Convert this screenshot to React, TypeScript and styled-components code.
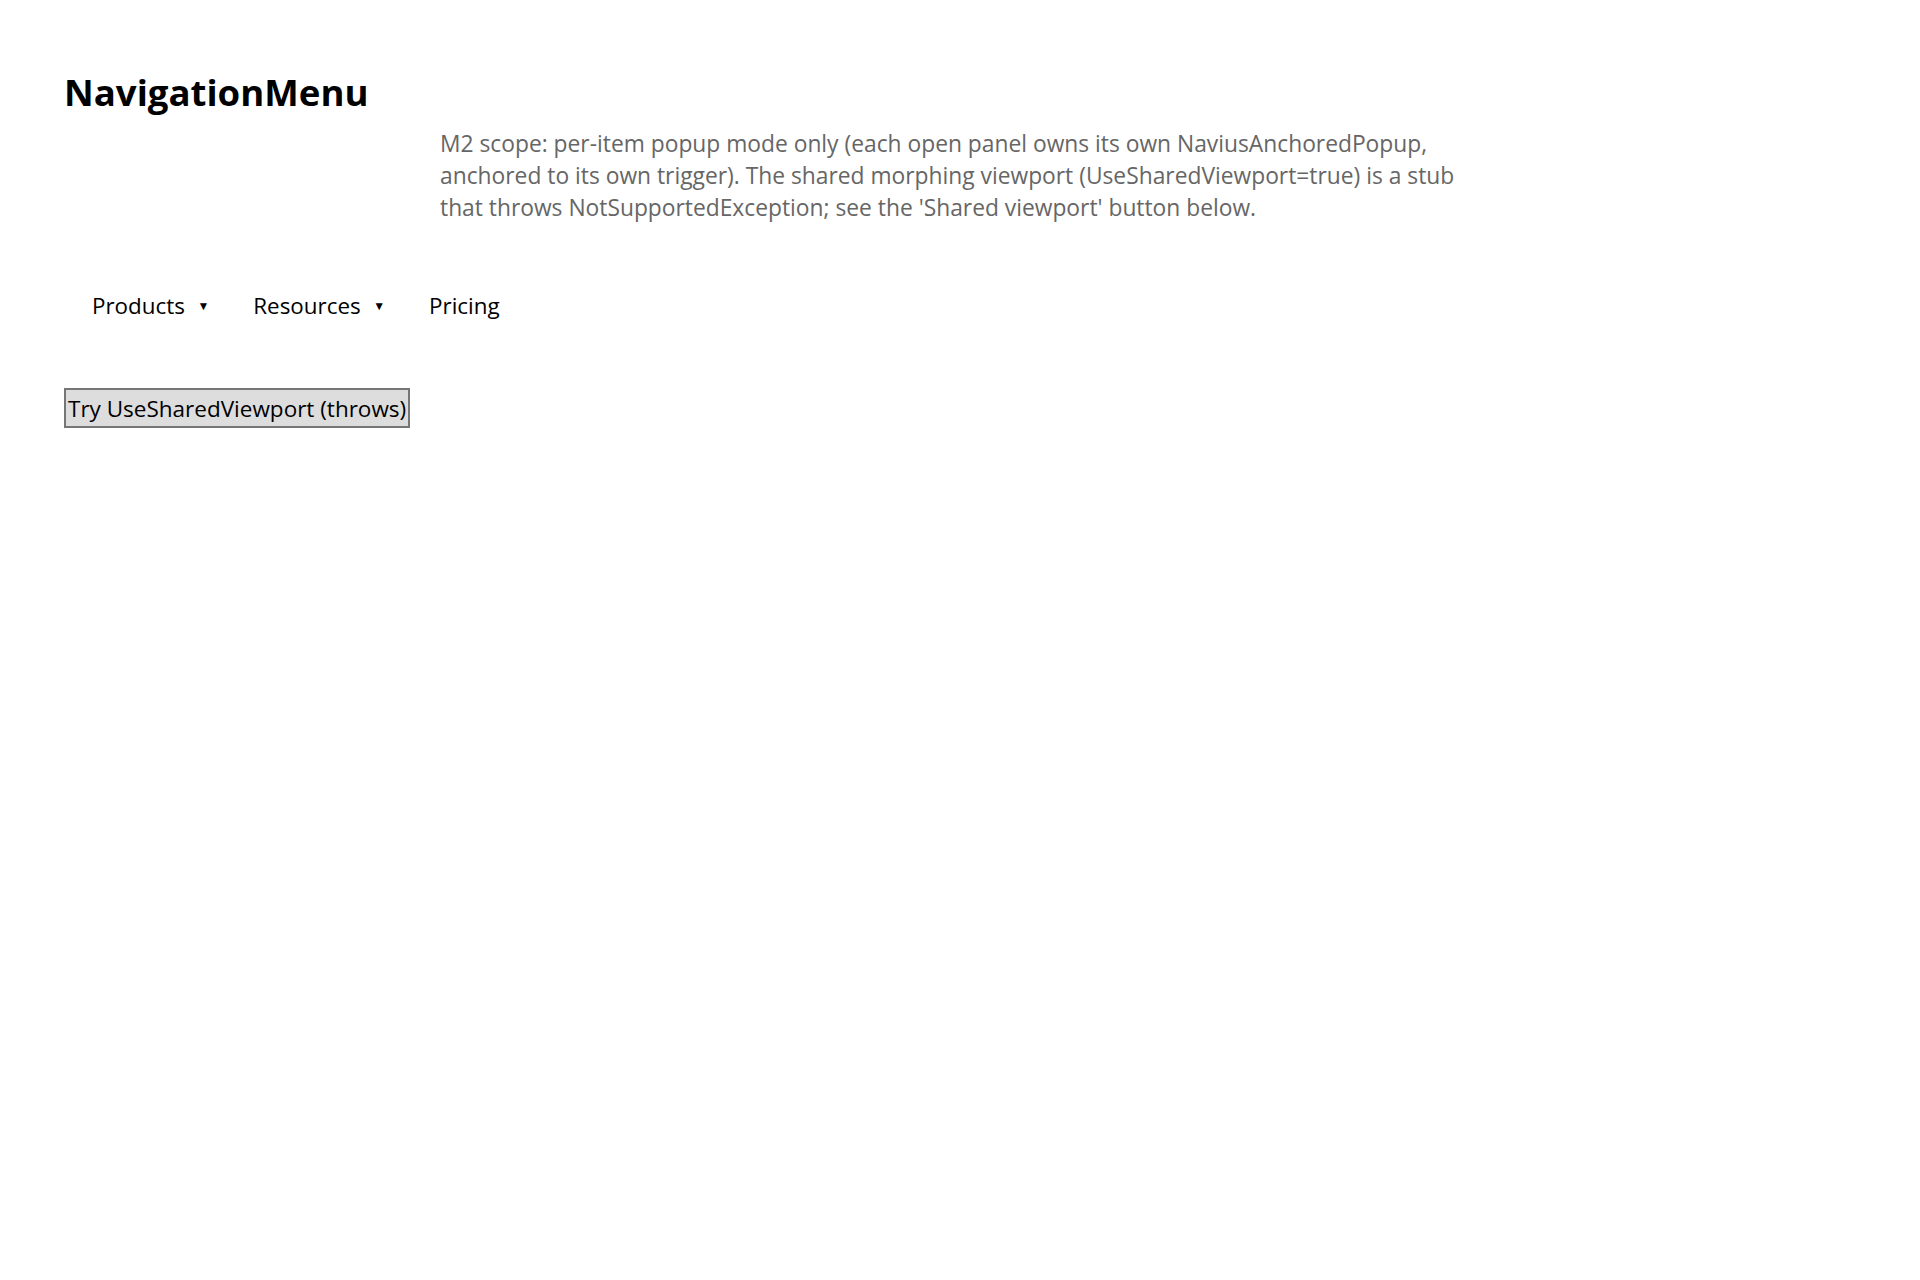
import React from "react";
import styled, { createGlobalStyle } from "styled-components";

const Global = createGlobalStyle`
  html, body { margin: 0; padding: 0; background: #ffffff; }
  body { font-family: "Open Sans", "Noto Sans", sans-serif; color: #000; }
`;

const Page = styled.main`
  padding: 66px 64px;
  display: flex;
  flex-direction: column;
`;

const Title = styled.h1`
  margin: 0;
  font-size: 36.6px;
  font-weight: 700;
  line-height: 52px;
`;

const Description = styled.p`
  margin: 9.5px 0 0 376px;
  font-size: 22.8px;
  line-height: 32px;
  color: #666666;
`;

const Nav = styled.nav`
  margin-top: 54.5px;
  display: flex;
  align-items: center;
  padding-left: 6px;
`;

const NavItem = styled.button`
  display: flex;
  align-items: center;
  gap: 12.5px;
  padding: 12px 22px;
  background: transparent;
  border: none;
  font-family: inherit;
  font-size: 22.4px;
  color: #000;
  cursor: pointer;
`;

const Caret = styled.span`
  font-size: 12px;
  line-height: 1;
`;

const Action = styled.button`
  margin-top: 55px;
  align-self: flex-start;
  height: 40px;
  padding: 0 2px;
  background: #dddddd;
  border: 2px solid #767676;
  font-family: inherit;
  font-size: 22.5px;
  color: #000;
`;

export default function App() {
  return (
    <>
      <Global />
      <Page>
        <Title>NavigationMenu</Title>
        <Description>
          M2 scope: per-item popup mode only (each open panel owns its own NaviusAnchoredPopup,
          <br />
          anchored to its own trigger). The shared morphing viewport (UseSharedViewport=true) is a stub
          <br />
          that throws NotSupportedException; see the 'Shared viewport' button below.
        </Description>
        <Nav>
          <NavItem>
            Products <Caret>▼</Caret>
          </NavItem>
          <NavItem>
            Resources <Caret>▼</Caret>
          </NavItem>
          <NavItem>Pricing</NavItem>
        </Nav>
        <Action>Try UseSharedViewport (throws)</Action>
      </Page>
    </>
  );
}
